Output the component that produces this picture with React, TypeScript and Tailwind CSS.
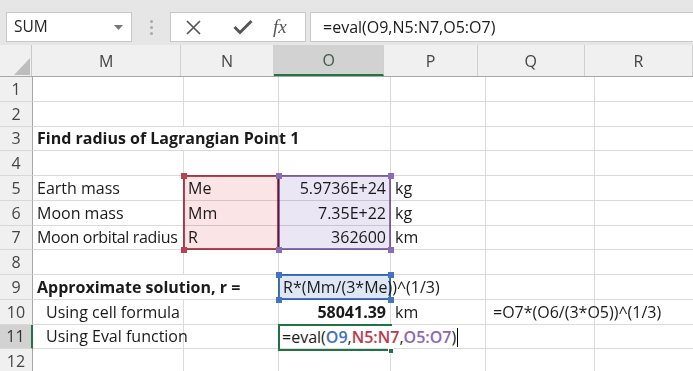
import React from "react";

const cellFont = { fontFamily: "'Open Sans', sans-serif" };

const colW = [151, 95, 112, 95, 109, 110];
const rowNums = [1, 2, 3, 4, 5, 6, 7, 8, 9, 10, 11];

type CellSpec = { text?: React.ReactNode; cls?: string };

function getCell(r: number, c: number): CellSpec {
  const map: Record<string, CellSpec> = {
    "3-0": { text: "Find radius of Lagrangian Point 1", cls: "font-bold text-[15px] pl-[4px] overflow-visible whitespace-nowrap" },
    "5-0": { text: "Earth mass", cls: "pl-[4px]" },
    "6-0": { text: "Moon mass", cls: "pl-[4px]" },
    "7-0": { text: "Moon orbital radius", cls: "pl-[4px] whitespace-nowrap tracking-[-0.35px]" },
    "5-1": { text: "Me", cls: "pl-[4px]" },
    "6-1": { text: "Mm", cls: "pl-[4px]" },
    "7-1": { text: "R", cls: "pl-[4px]" },
    "5-2": { text: "5.9736E+24", cls: "justify-end pr-[4px]" },
    "6-2": { text: "7.35E+22", cls: "justify-end pr-[4px]" },
    "7-2": { text: "362600", cls: "justify-end pr-[4px]" },
    "5-3": { text: "kg", cls: "pl-[4px]" },
    "6-3": { text: "kg", cls: "pl-[4px]" },
    "7-3": { text: "km", cls: "pl-[4px]" },
    "9-0": { text: "Approximate solution, r =", cls: "font-bold text-[15px] pl-[4px] whitespace-nowrap" },
    "10-0": { text: "Using cell formula", cls: "pl-[13px] whitespace-nowrap" },
    "11-0": { text: "Using Eval function", cls: "pl-[13px] whitespace-nowrap" },
    "10-2": { text: "58041.39", cls: "justify-end pr-[4px] font-bold text-[15px]" },
    "10-3": { text: "km", cls: "pl-[4px]" },
    "10-4": { text: "=O7*(O6/(3*O5))^(1/3)", cls: "pl-[7px] whitespace-nowrap" },
  };
  return map[`${r}-${c}`] || {};
}

function Corner({ x, y, color }: { x: number; y: number; color: string }) {
  return (
    <div
      className="absolute w-[6px] h-[6px]"
      style={{ left: x - 3, top: y - 3, background: color }}
    />
  );
}

export default function App() {
  const colLeft = [33];
  for (let i = 0; i < colW.length; i++) colLeft.push(colLeft[i] + colW[i]);
  const rowTop = (r: number) => 77 + (r - 1) * 24.75;

  const rangeBox = (
    c: number,
    r1: number,
    r2: number,
    border: string,
    fill: string,
    key: string
  ) => {
    const x = colLeft[c];
    const y = rowTop(r1);
    const w = colW[c];
    const h = rowTop(r2 + 1) - y;
    return (
      <React.Fragment key={key}>
        <div
          className="absolute"
          style={{ left: x - 1, top: y - 1, width: w + 1, height: h + 1, border: `2px solid ${border}`, background: fill, mixBlendMode: "multiply" }}
        />
        <Corner x={x} y={y} color={border} />
        <Corner x={x + w} y={y} color={border} />
        <Corner x={x} y={y + h} color={border} />
        <Corner x={x + w} y={y + h} color={border} />
      </React.Fragment>
    );
  };

  return (
    <div className="relative w-[693px] h-[371px] overflow-hidden bg-white text-[#1a1a1a]">
      {/* Toolbar */}
      <div className="h-[45px] bg-[#e6e6e6] flex items-start pt-[12px]" style={{ fontFamily: "'Open Sans', sans-serif" }}>
        <div className="ml-[6px] w-[126px] h-[30px] bg-white border border-[#c8c8c8] flex items-center pl-[7px] pr-[8px] justify-between">
          <span className="text-[15.5px] text-[#222]">SUM</span>
          <svg width="9" height="5" viewBox="0 0 9 5"><path d="M0 0 L9 0 L4.5 5 Z" fill="#777" /></svg>
        </div>
        <div className="w-[38px] h-[30px] flex flex-col items-center justify-center gap-[3px]">
          <div className="w-[3px] h-[3px] rounded-full bg-[#a8a8a8]" />
          <div className="w-[3px] h-[3px] rounded-full bg-[#a8a8a8]" />
          <div className="w-[3px] h-[3px] rounded-full bg-[#a8a8a8]" />
        </div>
        <div className="w-[136px] h-[30px] bg-white border border-[#c8c8c8] flex items-center">
          <svg className="ml-[14px]" width="17" height="17" viewBox="0 0 17 17">
            <path d="M2 2 L15 15 M15 2 L2 15" stroke="#555" strokeWidth="1.7" />
          </svg>
          <svg className="ml-[31px]" width="20" height="16" viewBox="0 0 20 16">
            <path d="M1.5 8 L7 13.5 L18.5 2" stroke="#555" strokeWidth="3" fill="none" />
          </svg>
          <span className="ml-[20px] text-[19px] italic text-[#555]" style={{ fontFamily: "'Liberation Serif', serif" }}>fx</span>
        </div>
        <div className="ml-[4px] flex-1 h-[30px] bg-white border border-[#c8c8c8] border-r-0 flex items-center pl-[12px]">
          <span className="text-[16px] text-[#1a1a1a]">=eval(O9,N5:N7,O5:O7)</span>
        </div>
      </div>

      {/* Column header */}
      <div className="h-[32px] flex bg-[#f0f0f0] border-b border-[#a8a8a8]" style={{ fontFamily: "'Open Sans', sans-serif" }}>
        <div className="w-[33px] h-full border-r border-[#c8c8c8] relative">
          <svg className="absolute left-[14px] top-[13px]" width="16" height="17" viewBox="0 0 16 17"><path d="M16 0 L16 17 L0 17 Z" fill="#bdbdbd" /></svg>
        </div>
        {["M", "N", "O", "P", "Q", "R"].map((l, i) => (
          <div
            key={l}
            className={
              "h-full flex items-center justify-center text-[16px] border-r border-[#d0d0d0] " +
              (l === "O" ? "bg-[#d2d2d2] text-[#3c5a48] border-b-2 border-b-[#217346]" : "text-[#444]")
            }
            style={{ width: colW[i] }}
          >
            {l}
          </div>
        ))}
      </div>

      {/* Rows */}
      <div className="flex flex-col" style={cellFont}>
        {rowNums.map((r) => (
          <div key={r} className="flex h-[24.75px]">
            <div
              className={
                "w-[33px] shrink-0 flex items-center justify-center text-[16px] border-b border-[#d8d8d8] " +
                (r === 11 ? "bg-[#d2d2d2] border-r-2 border-r-[#217346] text-[#333]" : "bg-[#f0f0f0] border-r border-r-[#a8a8a8] text-[#444]")
              }
            >
              {r}
            </div>
            {colW.map((w, c) => {
              const spec = getCell(r, c);
              const noRight = (r === 3 && c === 0) || (r === 9 && c === 0);
              return (
                <div
                  key={c}
                  className={
                    "shrink-0 flex items-center text-[16px] border-b border-[#dadada] " +
                    (noRight ? "" : "border-r border-r-[#dadada] ") +
                    (spec.cls || "")
                  }
                  style={{ width: w }}
                >
                  {spec.text}
                </div>
              );
            })}
          </div>
        ))}
        <div className="flex h-[24px]">
          <div className="w-[33px] shrink-0 flex items-center justify-center text-[16px] bg-[#f0f0f0] border-r border-[#a8a8a8] text-[#444]">
            12
          </div>
          {colW.map((w, c) => (
            <div key={c} className="shrink-0 border-r border-[#dadada]" style={{ width: w }} />
          ))}
        </div>
      </div>

      {/* Range highlights */}
      {rangeBox(1, 5, 7, "#b9434d", "#fbe4e6", "n")}
      {rangeBox(2, 5, 7, "#8a6bb5", "#ebe6f4", "o")}
      {rangeBox(2, 9, 9, "#4472c4", "#dfe7f5", "o9")}

      {/* O9 overflowing text */}
      <div
        className="absolute flex items-center text-[16px] whitespace-nowrap pointer-events-none"
        style={{ ...cellFont, left: colLeft[2] + 4, top: rowTop(9), height: 24.75 }}
      >
        R*(Mm/(3*Me))^(1/3)
      </div>

      {/* O11 active edit */}
      <div
        className="absolute border-2 border-[#217346]"
        style={{ left: colLeft[2] - 1, top: rowTop(11) - 1, width: colW[2] + 2, height: 27 }}
      />
      <div
        className="absolute w-[6px] h-[6px] bg-[#217346] border border-white"
        style={{ left: colLeft[3] - 3, top: rowTop(11) + 23 }}
      />
      <div
        className="absolute flex items-center bg-white text-[16px] whitespace-nowrap pl-[2px] pr-[2px]"
        style={{ ...cellFont, left: colLeft[2] + 1, top: rowTop(11) + 1.5, height: 22 }}
      >
        <span>=eval(</span>
        <span className="text-[#3f6fc4] font-semibold">O9</span>
        <span>,</span>
        <span className="text-[#c0394a] font-semibold">N5:N7</span>
        <span>,</span>
        <span className="text-[#8a67b8] font-semibold">O5:O7</span>
        <span>)</span>
        <span className="inline-block w-[1px] h-[19px] bg-black ml-[1px]" />
      </div>
    </div>
  );
}
